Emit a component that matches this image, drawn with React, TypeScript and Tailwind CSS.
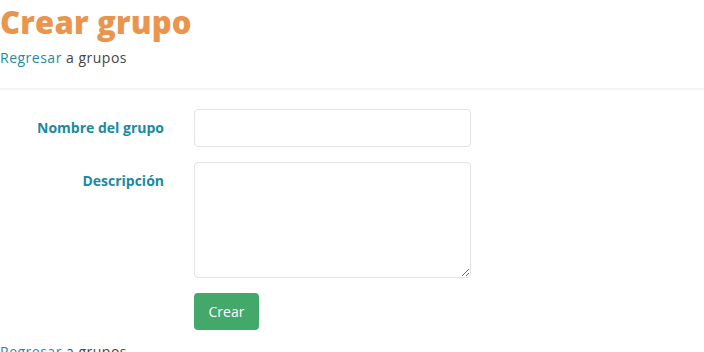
export default function App() {
  return (
    <div className="w-[704px] h-[352px] overflow-hidden bg-white" style={{ fontFamily: '"Open Sans", "Liberation Sans", sans-serif' }}>
      <h1 className="text-[31px] leading-[44px] font-extrabold text-[#e9954e] tracking-[0.2px]">Crear grupo</h1>
      <p className="mt-[4px] text-[14px] leading-[20px] text-[#444] tracking-[0.5px]">
        <span className="text-[#1f8aa3]">Regresar</span> a grupos
      </p>
      <div className="mt-[20px] h-[2px] bg-[#f4f4f4]" />
      <div className="mt-[19px] flex flex-col gap-[15px]">
        <div className="flex items-start gap-[30px]">
          <label className="w-[164px] text-right text-[14px] font-bold text-[#1a8aa2] leading-[20px] pt-[9px]">Nombre del grupo</label>
          <input className="w-[277px] h-[38px] border border-[#e3e3e3] rounded-[4px] outline-none" />
        </div>
        <div className="flex items-start gap-[30px]">
          <label className="w-[164px] text-right text-[14px] font-bold text-[#1a8aa2] leading-[20px] pt-[9px]">Descripción</label>
          <textarea className="w-[277px] h-[116px] border border-[#e3e3e3] rounded-[4px] outline-none" />
        </div>
        <div className="flex gap-[30px]">
          <div className="w-[164px]" />
          <button className="w-[65px] h-[37px] rounded-[4px] bg-[#45a86b] text-white text-[14px] leading-[20px]">Crear</button>
        </div>
      </div>
      <p className="mt-[12px] text-[14px] leading-[20px] text-[#444] tracking-[0.5px]">
        <span className="text-[#1f8aa3]">Regresar</span> a grupos
      </p>
    </div>
  );
}
